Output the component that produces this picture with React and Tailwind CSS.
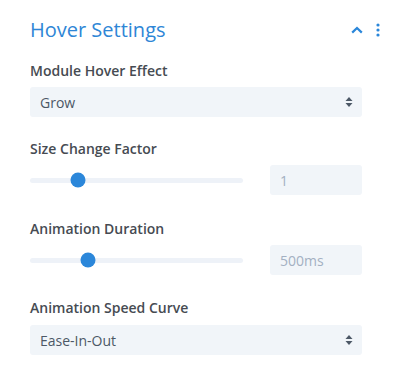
import React from "react";

function SelectArrows() {
  return (
    <svg width="8" height="12" viewBox="0 0 8 12" className="text-[#4c5866]">
      <path d="M4 1 L7.5 5 H0.5 Z" fill="currentColor" />
      <path d="M4 11 L7.5 7 H0.5 Z" fill="currentColor" />
    </svg>
  );
}

function Select({ value }) {
  return (
    <div className="flex h-[30px] w-full items-center justify-between rounded-[3px] bg-[#f1f5f9] pl-[10px] pr-[9px]">
      <span className="text-[14px] font-medium text-[#4c5866]">{value}</span>
      <SelectArrows />
    </div>
  );
}

function Range({ pos, value }) {
  return (
    <div className="flex items-center gap-[27px]">
      <div className="relative h-[5px] w-[213px] rounded-full bg-[#eef2f8]">
        <div
          className="absolute top-1/2 h-[15px] w-[15px] -translate-x-1/2 -translate-y-1/2 rounded-full bg-[#2b87da]"
          style={{ left: pos }}
        />
      </div>
      <div className="flex h-[30px] flex-1 items-center rounded-[3px] bg-[#f1f5f9] pl-[10px]">
        <span className="text-[14px] text-[#a3b0c2]">{value}</span>
      </div>
    </div>
  );
}

function Label({ children }) {
  return (
    <div className="text-[14px] font-semibold leading-[19px] text-[#464b52]">
      {children}
    </div>
  );
}

export default function App() {
  return (
    <div
      className="h-[383px] w-[393px] bg-white pl-[30px] pr-[31px] pt-[16px]"
      style={{ fontFamily: "'Open Sans', sans-serif" }}
    >
      <div className="-mr-[18px] flex items-center justify-between">
        <h2 className="text-[20px] leading-[27px] text-[#2e86d6]">Hover Settings</h2>
        <div className="flex items-center gap-[13px] text-[#2b87da]">
          <svg width="12" height="8" viewBox="0 0 12 8">
            <path d="M1.2 6.6 L6 2 L10.8 6.6" fill="none" stroke="currentColor" strokeWidth="2.2" />
          </svg>
          <svg width="4" height="14" viewBox="0 0 4 14">
            <circle cx="2" cy="2" r="1.6" fill="currentColor" />
            <circle cx="2" cy="7" r="1.6" fill="currentColor" />
            <circle cx="2" cy="12" r="1.6" fill="currentColor" />
          </svg>
        </div>
      </div>

      <div className="mt-[18px] flex flex-col gap-[7px]">
        <Label>Module Hover Effect</Label>
        <Select value="Grow" />
      </div>

      <div className="mt-[22px] flex flex-col gap-[7px]">
        <Label>Size Change Factor</Label>
        <Range pos="47.5px" value="1" />
      </div>

      <div className="mt-[24px] flex flex-col gap-[7px]">
        <Label>Animation Duration</Label>
        <Range pos="57.5px" value="500ms" />
      </div>

      <div className="mt-[23px] flex flex-col gap-[8px]">
        <Label>Animation Speed Curve</Label>
        <Select value="Ease-In-Out" />
      </div>
    </div>
  );
}
